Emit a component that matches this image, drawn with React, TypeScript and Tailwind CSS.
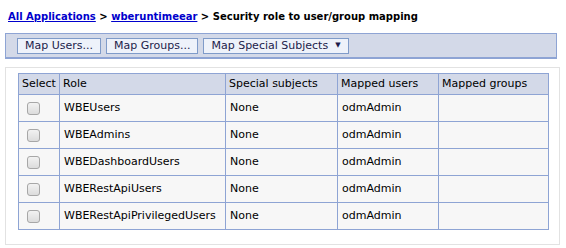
import React from "react";

const rows = [
  "WBEUsers",
  "WBEAdmins",
  "WBEDashboardUsers",
  "WBERestApiUsers",
  "WBERestApiPrivilegedUsers",
];

const Checkbox = () => (
  <span className="inline-block w-[13px] h-[13px] rounded-[3px] border border-[#a7a7a7] bg-gradient-to-b from-[#f2f2f2] to-[#dcdcdc]" />
);

export default function App() {
  return (
    <div className="w-[566px] h-[248px] bg-white text-[11px] text-black font-['DejaVu_Sans',Verdana,sans-serif]">
      <div className="pl-[8px] pt-[9px] h-[33px] font-bold text-[10px]">
        <a className="text-[#0000cc] underline">All Applications</a>
        {" > "}
        <a className="text-[#0000cc] underline">wberuntimeear</a>
        {" > Security role to user/group mapping"}
      </div>

      <div className="ml-[5px] w-[552px] h-[26px] border border-b-2 border-[#8ea4d4] bg-[#d3d9e8] flex items-center gap-[5px] pl-[11px]">
        <button className="h-[16px] px-[7px] border border-[#7f9bc9] bg-[#eef2fa] text-[#1c1c4a] leading-none">
          Map Users...
        </button>
        <button className="h-[16px] px-[7px] border border-[#7f9bc9] bg-[#eef2fa] text-[#1c1c4a] leading-none">
          Map Groups...
        </button>
        <button className="h-[16px] px-[7px] border border-[#7f9bc9] bg-[#eef2fa] text-[#1c1c4a] leading-none flex items-center gap-[7px]">
          Map Special Subjects
          <span className="text-[7px]">▼</span>
        </button>
      </div>

      <div className="ml-[5px] mt-[8px] w-[555px] h-[178px] border border-[#e2e2e2] pt-[5px] pl-[12px]">
        <table className="border-collapse w-[530px] table-fixed">
          <colgroup>
            <col className="w-[41px]" />
            <col className="w-[166px]" />
            <col className="w-[112px]" />
            <col className="w-[101px]" />
            <col className="w-[110px]" />
          </colgroup>
          <thead>
            <tr className="h-[21px] bg-[#d3d9e8]">
              {["Select", "Role", "Special subjects", "Mapped users", "Mapped groups"].map((h) => (
                <th key={h} className="border border-[#8ea4d4] px-[3px] text-left font-normal whitespace-nowrap">
                  {h}
                </th>
              ))}
            </tr>
          </thead>
          <tbody>
            {rows.map((r) => (
              <tr key={r} className="h-[27px] bg-[#f7f7f7]">
                <td className="border border-[#8ea4d4] pl-[8px]">
                  <div className="flex items-center">
                    <Checkbox />
                  </div>
                </td>
                <td className="border border-[#8ea4d4] px-[4px]">{r}</td>
                <td className="border border-[#8ea4d4] px-[4px]">None</td>
                <td className="border border-[#8ea4d4] px-[4px]">odmAdmin</td>
                <td className="border border-[#8ea4d4] px-[4px]"></td>
              </tr>
            ))}
          </tbody>
        </table>
      </div>
    </div>
  );
}
